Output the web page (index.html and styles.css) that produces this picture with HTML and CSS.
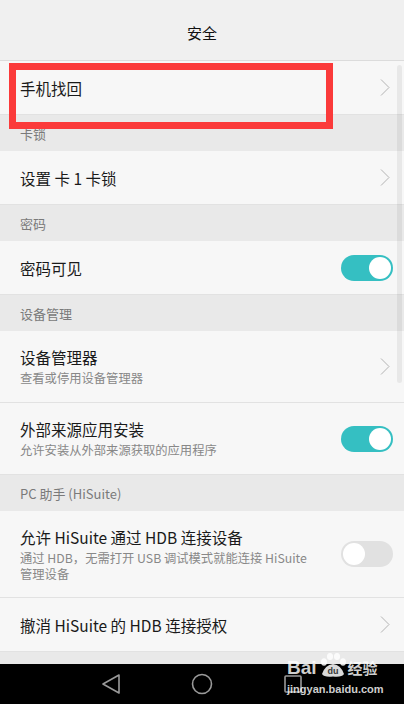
FILE: index.html
```html
<!DOCTYPE html>
<html lang="zh-CN">
<head>
  <meta charset="UTF-8" />
  <meta name="viewport" content="width=device-width, initial-scale=1.0" />
  <title>安全</title>
  <link rel="stylesheet" href="styles.css">
</head>
<body>
  <div class="screen">
    <div class="statusbar"></div>
    <div class="titlebar">安全</div>

    <div class="list">
      <div class="row">
        <div class="row-text"><div class="title">手机找回</div></div>
        <svg class="chev" width="10" height="17" viewBox="0 0 10 17"><path d="M1 0.5 L9 8.5 L1 16.5" fill="none" stroke="#b3b3b3" stroke-width="1"/></svg>
      </div>
      <div class="group">卡锁</div>
      <div class="row">
        <div class="row-text"><div class="title">设置 卡 1 卡锁</div></div>
        <svg class="chev" width="10" height="17" viewBox="0 0 10 17"><path d="M1 0.5 L9 8.5 L1 16.5" fill="none" stroke="#b3b3b3" stroke-width="1"/></svg>
      </div>
      <div class="group">密码</div>
      <div class="row">
        <div class="row-text"><div class="title">密码可见</div></div>
        <span class="switch on"></span>
      </div>
      <div class="group">设备管理</div>
      <div class="row tall">
        <div class="row-text">
          <div class="title">设备管理器</div>
          <div class="sub">查看或停用设备管理器</div>
        </div>
        <svg class="chev" width="10" height="17" viewBox="0 0 10 17"><path d="M1 0.5 L9 8.5 L1 16.5" fill="none" stroke="#b3b3b3" stroke-width="1"/></svg>
      </div>
      <div class="row tall">
        <div class="row-text">
          <div class="title">外部来源应用安装</div>
          <div class="sub">允许安装从外部来源获取的应用程序</div>
        </div>
        <span class="switch on"></span>
      </div>
      <div class="group">PC 助手 (HiSuite)</div>
      <div class="row taller">
        <div class="row-text">
          <div class="title">允许 HiSuite 通过 HDB 连接设备</div>
          <div class="sub narrow">通过 HDB，无需打开 USB 调试模式就能连接 HiSuite 管理设备</div>
        </div>
        <span class="switch"></span>
      </div>
      <div class="row">
        <div class="row-text"><div class="title">撤消 HiSuite 的 HDB 连接授权</div></div>
        <svg class="chev" width="10" height="17" viewBox="0 0 10 17"><path d="M1 0.5 L9 8.5 L1 16.5" fill="none" stroke="#b3b3b3" stroke-width="1"/></svg>
      </div>
      <div class="group">设备安全</div>
    </div>

    <div class="navbar">
      <svg width="20" height="22" viewBox="0 0 20 22"><path d="M18 2 L2 11 L18 20 Z" fill="none" stroke="#9a9a9a" stroke-width="1.6" stroke-linejoin="round"/></svg>
      <svg width="22" height="22" viewBox="0 0 22 22"><circle cx="11" cy="11" r="9.5" fill="none" stroke="#9a9a9a" stroke-width="1.6"/></svg>
      <svg width="20" height="20" viewBox="0 0 20 20"><rect x="2" y="2" width="16" height="16" rx="1" fill="none" stroke="#9a9a9a" stroke-width="1.6"/></svg>
    </div>

    <div class="highlight"></div>
    <div class="scrollthumb"></div>

    <div class="watermark">
      <div class="wm-logo">
        <span class="wm-bai">Bai</span>
        <svg width="30" height="26" viewBox="0 0 30 26">
          <ellipse cx="6" cy="10" rx="3" ry="3.8" fill="#fff"/>
          <ellipse cx="12" cy="4.5" rx="3" ry="3.6" fill="#fff"/>
          <ellipse cx="19" cy="4.5" rx="3" ry="3.6" fill="#fff"/>
          <ellipse cx="25" cy="10" rx="3" ry="3.8" fill="#fff"/>
          <path d="M4 22 Q7 13 15 12 Q23 13 26 22 Q24 25.5 15 24.5 Q6 25.5 4 22 Z" fill="#fff"/>
          <text x="15" y="22" text-anchor="middle" font-family="Liberation Sans, sans-serif" font-size="9" font-weight="bold" fill="#444">du</text>
        </svg>
        <span class="wm-jy">经验</span>
      </div>
      <div class="wm-url">jingyan.baidu.com</div>
    </div>
  </div>
</body>
</html>
```

FILE: styles.css
```css
* { box-sizing: border-box; }
body {
  margin: 0;
  font-family: "Noto Sans CJK SC", "Noto Sans", Roboto, sans-serif;
  background: #000;
}
.screen {
  position: relative;
  width: 404px; height: 704px;
  display: flex; flex-direction: column;
  overflow: hidden;
  background: #f0f0f0;
}
.statusbar { height: 8px; background: #f0f0f0; }
.titlebar {
  height: 53px;
  display: flex; align-items: center; justify-content: center;
  font-size: 15px; color: #111;
  border-bottom: 1px solid #dcdcdc;
  padding-bottom: 4px;
}
.list { flex: 1; overflow: hidden; background: #e9e9e9; }
.row {
  height: 54px;
  display: flex; align-items: center;
  padding: 0 11px 0 20px;
  background: #f7f7f7;
  border-bottom: 1px solid #e2e2e2;
}
.row.tall { height: 72px; }
.row.taller { height: 87px; }
.row-text { flex: 1; min-width: 0; }
.title { font-size: 15.5px; color: #1a1a1a; line-height: 20px; }
.sub {
  font-size: 12.3px; color: #888; line-height: 16px;
  margin-top: 3px;
}
.sub.narrow { padding-right: 30px; }
.group {
  height: 36px;
  display: flex; align-items: center;
  padding: 0 20px;
  font-size: 13px; color: #7a7a7a;
  background: #e9e9e9;
}
.chev { flex: none; margin-right: 3px; }
.switch {
  flex: none;
  position: relative;
  width: 52px; height: 26px;
  border-radius: 13px;
  background: #e1e1e1;
}
.switch::after {
  content: "";
  position: absolute; top: 2px; left: 2px;
  width: 22px; height: 22px; border-radius: 50%;
  background: #fff;
}
.switch.on { background: #35bfc2; }
.switch.on::after { left: 28px; }
.navbar {
  height: 40px; flex: none;
  background: #000;
  display: flex; align-items: center; justify-content: center;
  gap: 70px;
}
.highlight {
  position: absolute;
  left: 9px; top: 63px;
  width: 324px; height: 66px;
  border: 7px solid #fb3a3a;
}
.scrollthumb {
  position: absolute;
  right: 2px; top: 65px;
  width: 5px; height: 318px;
  border-radius: 3px;
  background: rgba(0, 0, 0, 0.06);
}
.watermark {
  position: absolute;
  left: 287px; top: 651px;
  color: rgba(255, 255, 255, 0.82);
  font-family: "Liberation Sans", Arial, sans-serif;
}
.wm-logo { display: flex; align-items: flex-end; height: 27px; }
.wm-bai { font-size: 19px; font-weight: bold; line-height: 20px; }
.wm-logo svg { opacity: 0.85; margin: 0 0 0 1px; }
.wm-jy { font-family: "Noto Sans CJK SC", sans-serif; font-size: 15px; font-weight: bold; line-height: 20px; }
.wm-url { font-size: 11px; font-weight: bold; margin-top: 5px; }
```
